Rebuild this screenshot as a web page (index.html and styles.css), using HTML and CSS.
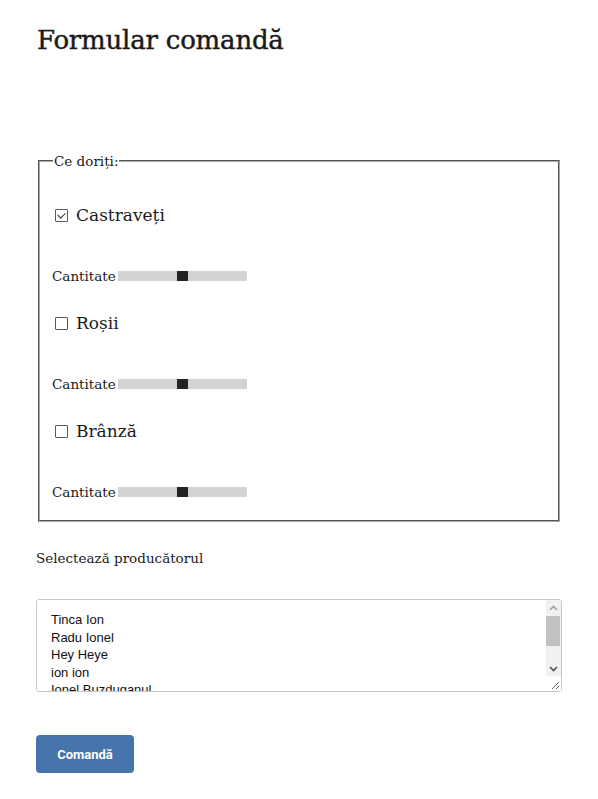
FILE: index.html
```html
<!DOCTYPE html>
<html lang="ro">
<head>
<meta charset="utf-8">
<title>Formular comandă</title>
<link rel="stylesheet" href="styles.css">
</head>
<body>
<main class="page">
  <h1 class="title">Formular comandă</h1>
  <form class="order">
    <fieldset class="products">
      <legend class="products-legend">Ce doriți:</legend>
      <div class="product">
        <label class="product-check"><input class="checkbox" type="checkbox" checked> Castraveți</label>
        <label class="qty">Cantitate<input class="slider" type="range" min="0" max="10" value="5"></label>
      </div>
      <div class="product">
        <label class="product-check"><input class="checkbox" type="checkbox"> Roșii</label>
        <label class="qty">Cantitate<input class="slider" type="range" min="0" max="10" value="5"></label>
      </div>
      <div class="product">
        <label class="product-check"><input class="checkbox" type="checkbox"> Brânză</label>
        <label class="qty">Cantitate<input class="slider" type="range" min="0" max="10" value="5"></label>
      </div>
    </fieldset>
    <label class="select-label" for="producer">Selectează producătorul</label>
    <div class="list-wrap">
      <select class="producer-list" id="producer" multiple>
        <option>Tinca Ion</option>
        <option>Radu Ionel</option>
        <option>Hey Heye</option>
        <option>ion ion</option>
        <option>Ionel Buzduganul</option>
        <option>Popescu Maria</option>
        <option>Dinu Vasile</option>
      </select>
      <div class="scrollbar" aria-hidden="true">
        <span class="sb-btn">
          <svg class="sb-arrow" width="9" height="6" viewBox="0 0 9 6"><path d="M1 5 L4.5 1.5 L8 5" fill="none" stroke="#a3a3a3" stroke-width="1.6"/></svg>
        </span>
        <span class="sb-track"><span class="sb-thumb"></span></span>
        <span class="sb-btn">
          <svg class="sb-arrow" width="9" height="6" viewBox="0 0 9 6"><path d="M1 1 L4.5 4.5 L8 1" fill="none" stroke="#505050" stroke-width="1.6"/></svg>
        </span>
      </div>
    </div>
    <button class="submit" type="submit">Comandă</button>
  </form>
</main>
</body>
</html>
```
FILE: styles.css
```css
html, body {
  margin: 0;
  padding: 0;
  background: #fff;
}

.page {
  padding: 0 36px 20px;
  font-family: "DejaVu Serif", "Liberation Serif", serif;
  font-size: 13.5px;
  color: #1a1a1a;
}

.title {
  margin: 22px 0 0 1px;
  font-size: 26px;
  line-height: 36px;
  font-weight: normal;
  letter-spacing: -0.2px;
  -webkit-text-stroke: 0.45px #1a1a1a;
}

.order {
  display: flex;
  flex-direction: column;
  align-items: flex-start;
}

.products {
  align-self: stretch;
  margin: 93px 2px 0;
  padding: 0 12px 18px;
  border: 2px groove #a8a8a8;
  display: flex;
  flex-direction: column;
}

.products-legend {
  padding: 0 1px;
  margin-left: 1px;
  line-height: 20px;
  font-size: 13.5px;
}

.product {
  display: flex;
  flex-direction: column;
  margin-top: 25px;
}

.product:first-of-type {
  margin-top: 32px;
}

.product-check {
  display: flex;
  align-items: center;
  height: 24px;
  font-size: 17px;
  line-height: 24px;
}

.checkbox {
  appearance: none;
  -webkit-appearance: none;
  position: relative;
  width: 13px;
  height: 13px;
  margin: 0 8px 0 3px;
  border: 1px solid #5a5a5a;
  border-radius: 1px;
  background: #fff;
  box-sizing: border-box;
}

.checkbox:checked::after {
  content: "";
  position: absolute;
  left: 3px;
  top: 1px;
  width: 4px;
  height: 6px;
  border: solid #333;
  border-width: 0 1px 1px 0;
  transform: rotate(45deg);
}

.qty {
  display: flex;
  align-items: center;
  margin-top: 39px;
  height: 20px;
  line-height: 20px;
}

.slider {
  -webkit-appearance: none;
  appearance: none;
  width: 129px;
  height: 10px;
  margin: 0 0 0 2px;
  background: #d3d3d3;
  outline: none;
}

.slider::-webkit-slider-thumb {
  -webkit-appearance: none;
  appearance: none;
  width: 11px;
  height: 10px;
  background: #222;
  border: none;
  cursor: pointer;
}

.select-label {
  margin-top: 26px;
  line-height: 20px;
}

.list-wrap {
  position: relative;
  align-self: stretch;
  margin-top: 31px;
}

.producer-list {
  display: block;
  width: 100%;
  height: 93px;
  box-sizing: border-box;
  padding: 12px 12px 10px;
  border: 1px solid #c8c8c8;
  border-radius: 3px;
  font-family: "Liberation Sans", Arial, sans-serif;
  font-size: 13px;
  color: #111;
  background: #fff;
  resize: vertical;
  outline: none;
}

.producer-list option {
  padding: 0 2px 2px;
}

.producer-list::-webkit-resizer {
  background-color: #fff;
  background-image: url("data:image/svg+xml,%3Csvg xmlns='http://www.w3.org/2000/svg' width='15' height='15' viewBox='0 0 15 15'%3E%3Cpath d='M13 6 L6 13 M13 10 L10 13' fill='none' stroke='%23666' stroke-width='1'/%3E%3C/svg%3E");
  background-repeat: no-repeat;
}

.scrollbar {
  position: absolute;
  top: 1px;
  right: 1px;
  width: 15px;
  height: 76px;
  display: flex;
  flex-direction: column;
  background: #f1f1f1;
  border-top-right-radius: 2px;
}

.sb-btn {
  display: flex;
  align-items: center;
  justify-content: center;
  height: 15px;
  flex: none;
}

.sb-track {
  flex: 1;
  display: flex;
  flex-direction: column;
  padding-top: 1px;
}

.sb-thumb {
  display: block;
  height: 30px;
  margin: 0 1px 0 0;
  background: #c1c1c1;
}

.submit {
  margin-top: 43px;
  width: 98px;
  height: 38px;
  border: 0;
  border-radius: 4px;
  background: #4674ab;
  color: #fff;
  font-family: Roboto, "Liberation Sans", Arial, sans-serif;
  font-weight: bold;
  font-size: 13px;
  cursor: pointer;
}
```
